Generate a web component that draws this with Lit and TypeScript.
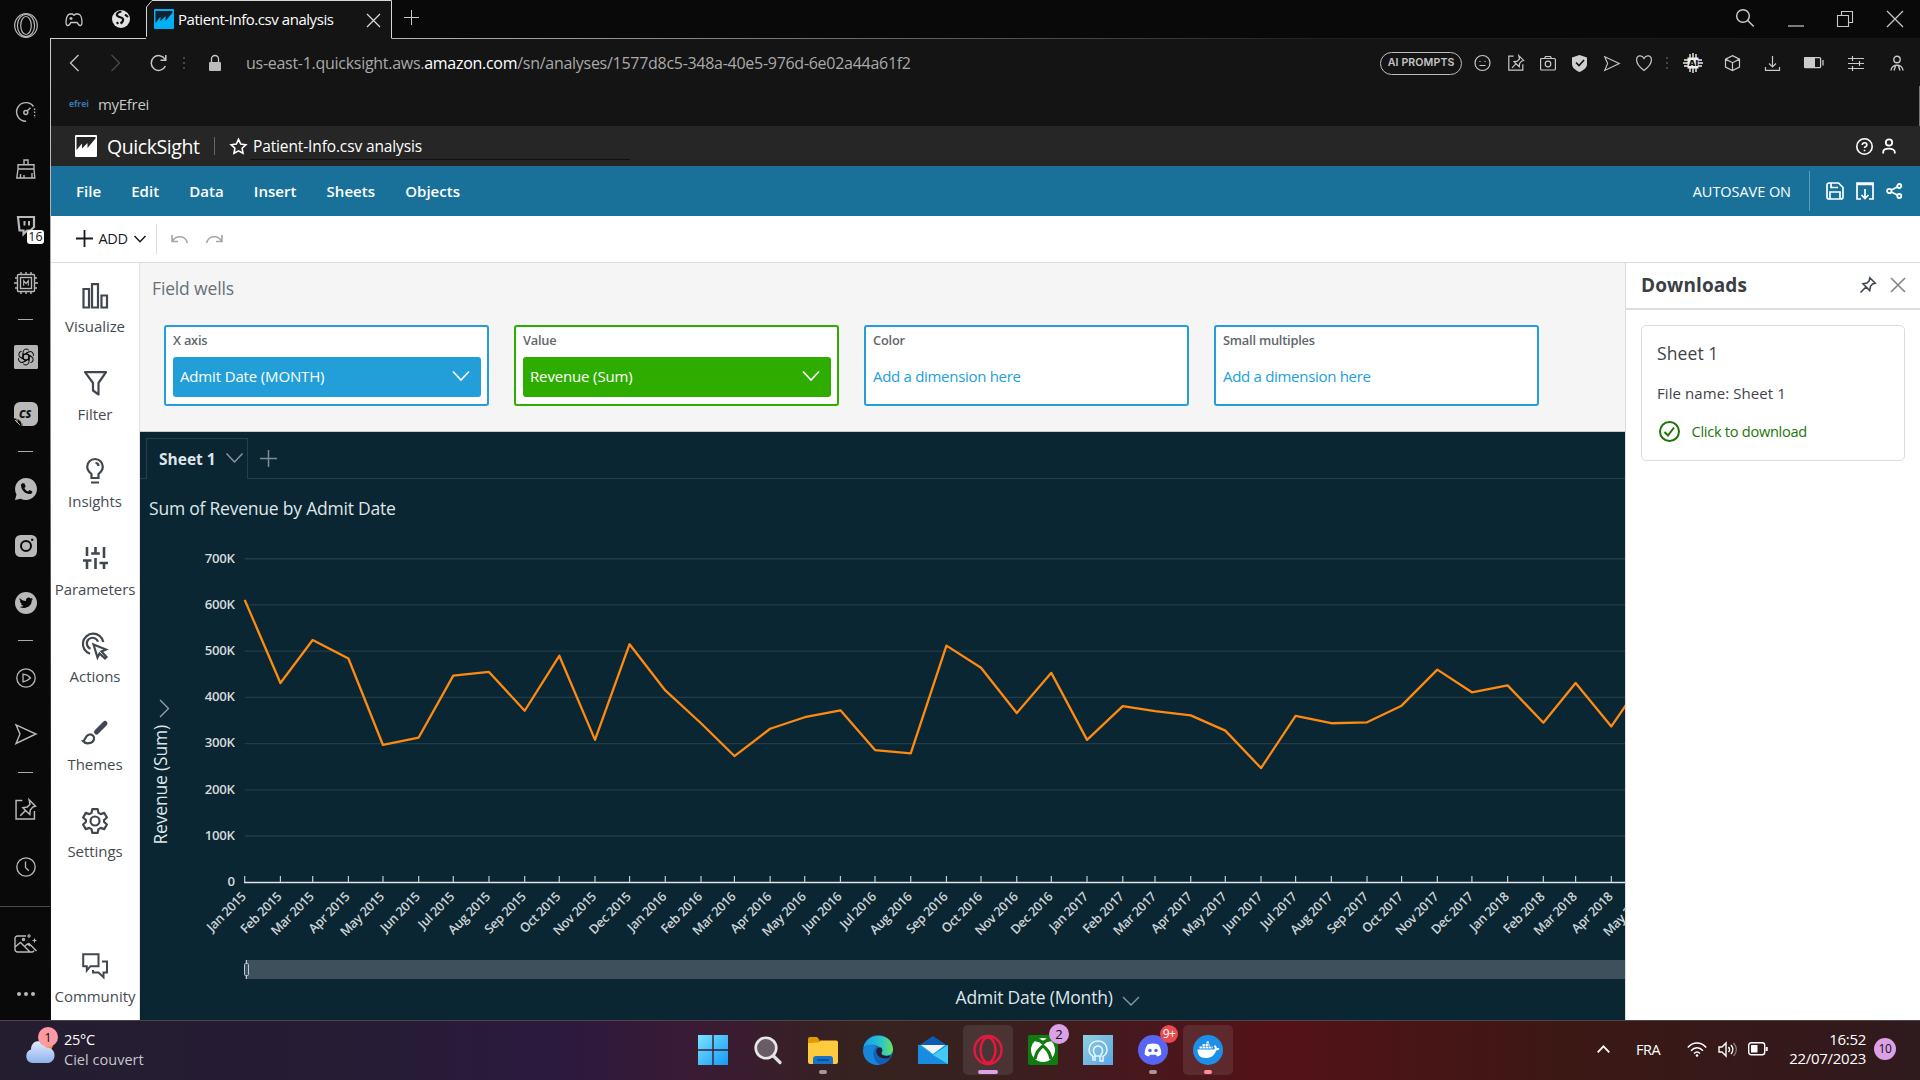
import { LitElement, html, css, svg, SVGTemplateResult } from "lit";
import { customElement } from "lit/decorators.js";

/** Wraps SVG shapes in a sized icon. Stroke icons inherit the text colour. */
const icon = (w: number, h: number, body: SVGTemplateResult, sw = 1.5, box = `0 0 ${w} ${h}`) => html`
  <svg class="icon" width=${w} height=${h} viewBox=${box} fill="none" stroke="currentColor" stroke-width=${sw}>${body}</svg>`;

const FONT = css`
  :host {
    font-family: "Open Sans", "Noto Sans", sans-serif;
    box-sizing: border-box;
  }
  * { box-sizing: border-box; }
  .icon { display: block; flex: none; overflow: visible; }
  svg text { font-family: "Open Sans", "Noto Sans", sans-serif; }
`;

const pinNote = svg`<path d="M7 1.500H1v17.500h17.500v-7.500"/><path d="M13.500.8l6 6-2.600.9-2.400 2.800-.4 4.200-3.300-3.100-3.300-3.300 4.200-.7 2.600-2.600zM10.500 10.500L5 16"/>`;
const paperPlane = svg`<path d="M1 .8L21 10 1 19.500 5 10z"/>`;

/* ------------------------------------------------ browser side bar */

@customElement("side-bar")
export class SideBar extends LitElement {
  static styles = [FONT, css`
    :host {
      display: flex; flex-direction: column; width: 50px; height: 1020px; padding-left: 1px;
      background: #090909; color: #b9b9b9;
    }
    .slot { height: 57px; display: flex; align-items: center; justify-content: center; flex: none; }
    .first { height: 51px; margin-bottom: 32px; }
    .dash { height: 17.800px; display: flex; align-items: center; justify-content: center; flex: none; }
    .dash i { width: 15px; height: 1px; background: #aaa; }
    .rule { height: 1px; background: #4a4a4a; margin: 10.500px 0 8px -1px; flex: none; }
    .badged { position: relative; margin-left: 1px; }
    .badge {
      position: absolute; left: 10px; top: 14px; width: 17px; height: 14px; background: #fff;
      color: #111; border-radius: 3px; font-size: 12.500px; line-height: 14px; text-align: center;
    }
    .last { height: 45px; }
  `];

  render() {
    const slot = (b: unknown, c = "") => html`<div class="slot ${c}">${b}</div>`;
    const dash = html`<div class="dash"><i></i></div>`;
    return html`
      ${slot(icon(24, 25, svg`<ellipse cx="12" cy="12.500" rx="11.300" ry="11.800"/><ellipse cx="12" cy="12.500" rx="8.600" ry="11"/><ellipse cx="12" cy="12.500" rx="5.300" ry="9"/>`, 1.2), "first")}
      ${slot(icon(20, 20, svg`<path d="M10 19.200A9.300 9.300 0 1 1 17.500 4.500"/><path d="M18.600 6.500v9.500" stroke-dasharray="1.500 1.600"/><circle cx="9.800" cy="10.500" r="2"/><path d="M11.200 9L14.500 5.800"/>`, 1.4))}
      ${slot(icon(20, 20, svg`<path d="M8 5.500V1h4v4.500M2 10V5.700h16V10zM2 10L.8 19h18L18 10M4.500 19v-4M8 19v-3M16 19v-5"/>`, 1.4))}
      ${slot(html`<div class="badged">${icon(18, 19, svg`<path d="M1 1h16v10l-3.500 3.500H10L6.500 18v-3.500H2.500z" stroke-width="2.200"/><path d="M7.500 5v4.500M12 5v4.500" stroke-width="2"/>`)}<div class="badge">16</div></div>`)}
      ${slot(icon(24, 24, svg`<rect x="3.500" y="3.500" width="17" height="17" rx="1"/><rect x="6.500" y="6.500" width="11" height="11"/><path d="M7 3.500V1M12 3.500V1M17 3.500V1M7 23v-2.500M12 23v-2.500M17 23v-2.500M1 7h2.500M0 12h3.500M1 17h2.500M23 7h-2.500M24 12h-3.500M23 17h-2.500"/><path d="M9.700 14.700V9.500l2.300 3 2.300-3v5.200" stroke-width="1.100"/>`, 1.4))}
      ${dash}
      ${slot(icon(24, 24, svg`<rect width="24" height="24" rx="1.500" fill="#b4b4b4" stroke="none"/><g stroke="#090909" stroke-width="1">${[0, 60, 120, 180, 240, 300].map(a => svg`<path transform="rotate(${a} 12 12)" d="M9 13.700V7.300a3.300 3.300 0 0 1 5.800-2.100M9 10.300l3-1.700 4.800 2.800"/>`)}</g>`))}
      ${slot(icon(24, 24, svg`<path d="M6 0h12a6 6 0 0 1 6 6v12a6 6 0 0 1-6 6H9A9 9 0 0 0 0 16V6a6 6 0 0 1 6-6z" fill="#b9b9b9" stroke="none"/><path d="M0 16c4-.6 9 4 8 8M3 16.500v4M1 18l5 5" stroke-width="1"/><text x="5" y="15.500" font-size="10.500" font-weight="800" font-style="italic" fill="#111" stroke="none">CS</text>`))}
      ${dash}
      ${slot(icon(22, 22, svg`<path d="M11 0a11 11 0 1 1-5.200 20.700L0 22l1.500-5.500A11 11 0 0 1 11 0z" fill="#b9b9b9" stroke="none"/><path d="M6 7c0 5 4.500 9.500 9.500 9 1.500-.2 2-1.500 1.800-2.400l-2.700-1.500-1.500 1.500c-1.800-.6-3-2-3.700-3.600L10.700 8.500 9.500 5.500C8 5 6 5.600 6 7z" fill="#090909" stroke="none"/>`))}
      ${slot(icon(22, 22, svg`<rect width="22" height="22" rx="5.500" fill="#b9b9b9" stroke="none"/><circle cx="11" cy="11" r="5" stroke="#090909" stroke-width="2"/><circle cx="17.200" cy="4.800" r="1.200" fill="#090909" stroke="none"/>`))}
      ${slot(icon(22, 22, svg`<circle cx="11" cy="11" r="11" fill="#b9b9b9" stroke="none"/><path d="M4.700 6c1.600 2 3.800 3 6.200 3.100-.5-3.200 3-4.500 4.900-2.700l1.900-.6-1.100 1.600 1.500-.3-1.400 1.500c.2 5.500-6 9.400-12.100 6.300 1.700.1 3-.4 3.900-1.200-1.300-.1-2.200-.9-2.500-1.900h1.200C5.800 11.400 5 10.300 5 9l1.200.3C5 8.500 4.200 7.500 4.700 6z" fill="#090909" stroke="none"/>`))}
      ${dash}
      ${slot(icon(20, 20, svg`<circle cx="10" cy="10" r="9.200"/><path d="M7 6.200c4 .4 6 2 7.500 3.800C13 11.500 11 13.300 7 13.800z"/>`, 1.3))}
      ${slot(icon(22, 21, paperPlane, 1.4))}
      ${dash}
      ${slot(icon(21, 21, pinNote, 1.4, "0 0 20 20"))}
      ${slot(icon(20, 20, svg`<circle cx="10" cy="10" r="9.200"/><path d="M9.500 4.500V10.500l3.300 3.300"/>`, 1.3))}
      <div class="rule"></div>
      ${slot(icon(23, 19, svg`<path d="M12 2H3.500A2.500 2.500 0 0 0 1 4.500v11A2.500 2.500 0 0 0 3.500 18H18a2 2 0 0 0 2-1.500M1 13l5.500-4.500 9 9M11 12l2.500-2 2.500 2M14.500 9l8 8"/><circle cx="9.500" cy="5.500" r="1"/><path d="M15 0v4M13 2h4M20.500 4.500v4M18.500 6.500h4" stroke-width="1.200"/>`, 1.4))}
      ${slot(icon(18, 4, svg`<g fill="currentColor" stroke="none"><circle cx="2" cy="2" r="2"/><circle cx="9" cy="2" r="2"/><circle cx="16" cy="2" r="2"/></g>`), "last")}
    `;
  }
}

/* ------------------------------------------------ browser chrome */

@customElement("browser-chrome")
export class BrowserChrome extends LitElement {
  static styles = [FONT, css`
    :host { display: block; color: #c8c8c8; font-size: 15px; height: 126px; background: #141414; }
    .tabs { height: 39px; display: flex; align-items: flex-start; background: #090909; }
    .lead { width: 95px; height: 39px; display: flex; padding: 10px 0 0 14px; gap: 29px; border-bottom: 1px solid #cfcfcf; }
    .lead svg:first-child { margin-top: 3px; }
    .tab { width: 246px; height: 39px; position: relative; display: flex; padding: 9px 0 0 8px; color: #fff; }
    .shape { position: absolute; left: 0; top: 0; }
    .fav, .name, .x { position: relative; }
    .name { margin-left: 4px; line-height: 20px; width: 189px; letter-spacing: -0.450px; white-space: nowrap; }
    .x { margin-top: 5px; color: #ddd; }
    .rest {
      flex: 1; height: 39px; display: flex; padding: 9px 17px 0 12px; background:
        linear-gradient(90deg, #b5b5b5, #777 25%, #222 60%, #141414) bottom / 100% 1px no-repeat;
    }
    .win { margin-left: auto; display: flex; gap: 33.700px; }
    .win > :nth-child(2) { margin-top: 16px; }
    .win > :nth-child(n+3) { margin-top: 2px; }
    .bar { height: 47px; display: flex; align-items: center; padding: 1px 16px 0 19px; }
    .bar .url { margin-left: 25px; font-size: 16px; letter-spacing: -0.280px; white-space: nowrap; color: #a9a9a9; }
    .url b { font-weight: 500; color: #fff; }
    .fwd { color: #4a4a4a; margin: 0 30px 0 32px; }
    .dots { width: 2px; height: 13px; margin: 0 24px 0 16px; background: repeating-linear-gradient(#444 0 2px, transparent 2px 5px); }
    .pill {
      margin-left: auto; width: 82px; height: 23px; border: 1.500px solid #bdbdbd; border-radius: 12px;
      font: 600 10.600px/20px Inter, sans-serif; text-align: center; letter-spacing: .1px; color: #c4c4c4; margin-right: 12px;
    }
    .tools { display: flex; align-items: center; gap: 16.400px; }
    .tools .dots { margin: 0 3px 0 -2.500px; }
    .ext { display: flex; align-items: center; gap: 24px; margin-left: 12px; }
    .ext svg:nth-child(2) { margin: 0 1px 0 -2px; }
    .ext svg:last-child { margin-left: 2px; }
    .marks { height: 40px; display: flex; align-items: center; padding: 0 0 5px 18px; gap: 9px; border-right: 1px solid #777; }
    .efrei { color: #3a77ad; font-weight: 700; font-size: 8.500px; line-height: 20px; width: 20px; letter-spacing: 0; padding-top: 1px; }
    .marks span { letter-spacing: -0.300px; }
  `];

  render() {
    return html`
      <div class="tabs">
        <div class="lead">
          ${icon(18, 14, svg`<path d="M5 1h2.500l1 1h1l1-1H13c2.500 0 4 4 4 8.500 0 3-2 4-3.500 2L12 9.500H6L4.500 11.500C3 13.500 1 12.500 1 9.500 1 5 2.500 1 5 1zM6 4v3M4.500 5.500h3M12 4.200v.1M13 6.500v.1"/>`, 1.3)}
          ${icon(18, 18, svg`<circle cx="9" cy="9" r="9" fill="#e2e2e2" stroke="none"/><path d="M9.500 1.500c-4 .5-5.500 3-4 4.500s5 1 5.500 3-1 3.500-2.500 4.500M13 4.500l3 2.500M5 12l1 2" stroke="#111" stroke-width="2.200"/>`)}
        </div>
        <div class="tab">
          <svg class="shape" width="246" height="39"><path d="M-1 38.500L.5 36V7L6 .5H245.500V39H0z" fill="#141414"/><path d="M-1 38.500L.5 36V7L6 .5H245.500V38.500" fill="none" stroke="#d8d8d8"/></svg>
          <div class="fav">${icon(20, 20, svg`<rect width="20" height="20" rx="1" fill="#00b0f5" stroke="none"/><path d="M1.500 2h17v1.500l-7 8.500V7l-5 5V7.500L1.500 14z" fill="#123" stroke="none"/>`)}</div>
          <div class="name">Patient-Info.csv analysis</div>
          <div class="x">${icon(13, 13, svg`<path d="M0 0l13 13M13 0L0 13"/>`, 1.2)}</div>
        </div>
        <div class="rest">
          ${icon(15, 16, svg`<path d="M7.500 1v15M0 8.500h15"/>`, 1)}
          <div class="win">
            ${icon(18, 18, svg`<circle cx="7" cy="7" r="6.300"/><path d="M11.700 11.500l6 6"/>`, 1.5)}
            ${icon(16, 2, svg`<path d="M0 1h16"/>`, 1.2)}
            ${icon(16, 16, svg`<path d="M.500 4.500h11v11H.500zM4.500 4.500V.500h11v11h-4"/>`, 1.1)}
            ${icon(16, 16, svg`<path d="M0 0l16 16M16 0L0 16"/>`, 1.2)}
          </div>
        </div>
      </div>
      <div class="bar">
        ${icon(9, 16, svg`<path d="M8.500 0L.5 8l8 8"/>`, 1.3)}
        <div class="fwd">${icon(9, 16, svg`<path d="M.5 0l8 8-8 8"/>`, 1.3)}</div>
        ${icon(17, 16, svg`<path d="M15 4.200A7.400 7.400 0 1 0 15.400 11M15.800 0v5.200H10.500"/>`, 1.5)}
        <div class="dots"></div>
        ${icon(12, 16, svg`<rect y="7" width="12" height="9" rx="1" fill="#bbb" stroke="none"/><path d="M2.500 7V4a3.500 3.500 0 0 1 7 0v3"/>`, 1.3)}
        <div class="url">us-east-1.quicksight.aws.<b>amazon.com</b>/sn/analyses/1577d8c5-348a-40e5-976d-6e02a44a61f2</div>
        <div class="pill">AI PROMPTS</div>
        <div class="tools">
          ${icon(17, 16, svg`<circle cx="8.500" cy="8" r="7.500"/><path d="M5.500 10.500h6M6 6v.9M11 6v.9"/>`, 1.2)}
          ${icon(16, 16, pinNote, 1.5, "0 0 20 20")}
          ${icon(16, 14, svg`<rect x=".6" y="2.500" width="14.800" height="11.500" rx="1"/><path d="M4.500 2.500l1-2h5l1 2"/><circle cx="8" cy="8" r="2.800"/>`, 1.2)}
          ${icon(15, 17, svg`<path d="M7.500 0L15 2.500V9c0 4-4 6.500-7.500 8C4 15.500 0 13 0 9V2.500z" fill="#cfcfcf" stroke="none"/><path d="M4 7.500L7 10.500l5-5.500" stroke="#111" stroke-width="1.600"/>`)}
          ${icon(16, 15, paperPlane, 1.5, "0 0 22 20")}
          ${icon(16, 16, svg`<path d="M8 15.500C4 12.500.6 9 .6 5 .6 0 6 -.5 8 3.500 10-.5 15.400 0 15.400 5c0 4-3.400 7.500-7.400 10.500z"/>`, 1.2)}
          <div class="dots"></div>
        </div>
        <div class="ext">
          ${icon(20, 20, svg`<path d="M7 1v18M10 0v20M13 1v18M1 7h18M0 10h20M1 13h18" stroke="#eee" stroke-width="1.400"/><rect x="4.500" y="4.500" width="11" height="11" fill="#eee" stroke="none"/><text x="5.800" y="13.400" font-size="9" font-weight="800" fill="#111" stroke="none">AI</text>`)}
          ${icon(15, 16, svg`<path d="M7.500.6l7 3.500v8l-7 3.400-7-3.400v-8zM.5 4.100l7 3.600 7-3.600M7.500 7.700v7.800"/>`, 1.2)}
          ${icon(15, 15, svg`<path d="M7.500 0v10.500M4 7.500l3.500 3.500L11 7.500M.5 11v3.300h14V11"/>`, 1.2)}
          ${icon(20, 12, svg`<rect x=".6" y=".6" width="16" height="10" rx="1.200"/><rect width="11" height="11" rx="1" fill="#ccc" stroke="none"/><path d="M19 3v5.500"/>`, 1.3)}
          ${icon(16, 15, svg`<path d="M0 2.500h16M0 7.500h16M0 12.500h16M4.500 0v5M11.500 5v5M4.500 10v5"/>`, 1.2)}
          ${icon(14, 16, svg`<circle cx="7" cy="4.500" r="3.200"/><path d="M1 15.500c.5-7 11.500-7 12 0M4 15.500l1.500-4.500M10 15.500L8.500 11"/>`, 1.4)}
        </div>
      </div>
      <div class="marks"><div class="efrei">efrei</div><span>myEfrei</span></div>
    `;
  }
}

/* ------------------------------------------------ QuickSight header, menu and toolbar */

@customElement("qs-header")
export class QsHeader extends LitElement {
  static styles = [FONT, css`
    :host { display: block; color: #fff; }
    .brand { height: 40px; background: #262626; display: flex; align-items: center; padding: 0 24px; }
    .product { margin-left: 10px; font-size: 19.500px; font-weight: 500; letter-spacing: -0.430px; width: 107px; }
    .split { width: 1px; height: 18px; background: #666; margin-right: 15px; }
    .title { margin-left: 3px; padding: 4px 0 0 3px; width: 380px; height: 28px; line-height: 20px; border-bottom: 1px solid #111; font-size: 15.500px; font-weight: 500; letter-spacing: -0.130px; }
    .who { margin-left: auto; display: flex; gap: 9px; }
    .menu { height: 50px; background: #19719a; display: flex; align-items: center; padding: 0 17px 0 25px; font-size: 15px; font-weight: 600; letter-spacing: .050px; }
    .menu span { margin-right: 30px; }
    .auto { margin-left: auto; font-weight: 500; font-size: 14.500px; letter-spacing: -0.050px; }
    .line { width: 1px; height: 40px; background: #5b9dbb; margin: 0 16px 0 18px; }
    .acts { display: flex; gap: 12px; align-items: center; }
    .tool { height: 47px; background: #fff; color: #16191f; display: flex; align-items: center; padding: 0 0 1px 24.500px; border-bottom: 1px solid #dcdcdc; font-size: 14.500px; }
    .tool .add { margin: 0 7px 0 6px; letter-spacing: -0.400px; width: 28px; }
    .bar { width: 1px; height: 30px; background: #ddd; margin: 0 14px 0 10px; }
    .hist { display: flex; gap: 18px; color: #a6a6a6; }
  `];

  render() {
    const undo = svg`<path d="M1 1v6.500h6M1.500 7C5 1 14 1 16.500 9"/>`;
    return html`
      <div class="brand">
        ${icon(22, 22, svg`<rect width="22" height="22" rx="1" fill="#fff" stroke="none"/><path d="M1.500 2h19v1.500L12.500 13V8L7 13.500V8.500L1.500 15z" fill="#262626" stroke="none"/>`)}
        <div class="product">QuickSight</div>
        <div class="split"></div>
        ${icon(17, 16, svg`<path d="M8.500 1.300l2.200 4.700 5.200.7-3.800 3.500.9 5.100-4.500-2.500L4 15.300l.9-5.100L1.100 6.700 6.300 6z"/>`, 1.6)}
        <div class="title">Patient-Info.csv analysis</div>
        <div class="who">
          ${icon(17, 17, svg`<circle cx="8.500" cy="8.500" r="7.700"/><path d="M6.200 7c0-3 4.700-2.800 4.700 0 0 1.500-2.400 1.500-2.400 3M8.500 11.800v1.500"/>`, 1.6)}
          ${icon(14, 16, svg`<circle cx="7" cy="4.500" r="3.200"/><path d="M1.200 15.500v-1.500c0-4.500 11.600-4.500 11.600 0v1.500"/>`, 1.8)}
        </div>
      </div>
      <div class="menu">
        ${["File", "Edit", "Data", "Insert", "Sheets", "Objects"].map(m => html`<span>${m}</span>`)}
        <div class="auto">AUTOSAVE ON</div>
        <div class="line"></div>
        <div class="acts">
          ${icon(18, 18, svg`<path d="M1 3a2 2 0 0 1 2-2h9.500L17 5.500V15a2 2 0 0 1-2 2H3a2 2 0 0 1-2-2zM4 17v-7h10v7M5 1v4.500h7"/>`, 1.7)}
          ${icon(18, 18, svg`<path d="M5 17H1V1h16v16h-4M1 2.500h16M9 7v9.500M5.500 13L9 16.500l3.500-3.500"/>`, 1.7)}
          ${icon(17, 16, svg`<circle cx="3.300" cy="8" r="2.200"/><circle cx="13.300" cy="3" r="2"/><circle cx="13.300" cy="13" r="2"/><path d="M5.300 7l6-3M5.300 9l6 3"/>`, 1.8)}
        </div>
      </div>
      <div class="tool">
        ${icon(17, 17, svg`<path d="M8.500 0v17M0 8.500h17"/>`, 1.8)}
        <div class="add">ADD</div>
        ${icon(12, 8, svg`<path d="M.5 1L6 6.700 11.500 1"/>`, 1.5)}
        <div class="bar"></div>
        <div class="hist">
          ${icon(17, 10, undo, 1.6)}
          ${icon(17, 10, svg`<g transform="translate(17 0) scale(-1 1)">${undo}</g>`, 1.6)}
        </div>
      </div>
    `;
  }
}

/* ------------------------------------------------ analysis navigation */

@customElement("qs-nav")
export class QsNav extends LitElement {
  static styles = [FONT, css`
    :host { display: flex; flex-direction: column; width: 89px; height: 757px; background: #fff; border-right: 1px solid #e2e2e2; color: #414750; padding-top: 18.500px; }
    .item { height: 87.500px; display: flex; flex-direction: column; align-items: center; flex: none; }
    .glyph { height: 28px; display: flex; align-items: center; }
    .label { font-size: 15px; line-height: 20px; margin-top: 6.500px; letter-spacing: -0.050px; white-space: nowrap; color: #454b52; }
    .item:last-child { margin-top: 57.500px; }
  `];

  render() {
    const items: [string, unknown][] = [
      ["Visualize", icon(26, 26, svg`<path d="M1.500 6h5.500v18.500H1.500zM10 1.200h6v23.300h-6zM19.500 12.500H25v12h-5.500z"/>`, 2.2)],
      ["Filter", icon(23, 25, svg`<path d="M1 1.200h21L14.500 12v11.500L9 19.500V12z" stroke-linejoin="round"/>`, 2.2)],
      ["Insights", icon(18, 26, svg`<path d="M5.500 20v-4C3 14 1.200 12 1.200 8.800a7.800 7.800 0 0 1 15.600 0c0 3.200-1.800 5.200-4.300 7.200v4zM5 24.500h8M9.500 5c1.800 0 3 1.200 3 3"/>`, 2.2)],
      ["Parameters", icon(25, 22, svg`<path d="M4 0v9M4 14v8M0 13.500h8.500M12.500 0v6M12.500 11v11M8.200 6.500h8.600M21 0v11M21 17v5M16.500 16h8.500"/>`, 2.6)],
      ["Actions", icon(26, 26, svg`<path d="M8 20.800A10.300 10.300 0 1 1 21.300 9"/><path d="M8.500 15.800a5.700 5.700 0 1 1 7.500-7"/><path d="M11.500 11.500l12.500 5-4.500 2 5 5.500-1.500 1.500-5.500-5-2 4z"/>`, 2.2)],
      ["Themes", icon(26, 24, svg`<path d="M23 2.500L14.500 11" stroke-width="5" stroke-linecap="round"/><path d="M1 20c2.500-.3 2-6 6.500-6.500 3-.3 5 2 4.500 4.500-1 5-8.500 5.500-11 2z" stroke-width="2.200"/>`)],
      ["Settings", icon(26, 26, svg`<path d="M10.300 1.200h5.400l.8 3.700 2.200 1.200 3.500-1.200 2.700 4.600-2.800 2.500v2l2.800 2.500-2.700 4.600-3.500-1.200-2.200 1.200-.8 3.700h-5.400l-.8-3.700-2.200-1.200-3.500 1.200-2.700-4.600L3.900 14v-2L1.100 9.500l2.700-4.600 3.500 1.200 2.200-1.200z" stroke-linejoin="round"/><circle cx="13" cy="13" r="4.500"/>`, 2.2)],
      ["Community", icon(26, 26, svg`<path d="M1.200 1.200h15.300v12H8.500l-3.700 4.300v-4.300H1.200z"/><path d="M20 8.500h5v11h-3.500v4.700l-5-4.700H11V17"/>`, 2)],
    ];
    return items.map(([label, glyph]) => html`
      <div class="item"><div class="glyph">${glyph}</div><div class="label">${label}</div></div>`);
  }
}

/* ------------------------------------------------ field wells */

@customElement("field-wells")
export class FieldWells extends LitElement {
  static styles = [FONT, css`
    :host { display: block; height: 169px; background: #f5f5f5; border-bottom: 1px solid #ccc; padding: 13px 12px 0; }
    .head { font-size: 17.500px; line-height: 24px; color: #687078; letter-spacing: -0.150px; }
    .wells { display: flex; gap: 25px; padding: 25px 0 0 12px; }
    .well { width: 325px; height: 81px; border: 2px solid #229fd9; border-radius: 3px; background: #fff; padding: 4px 6px 0 7px; }
    .well.value { border-color: #2ead00; }
    .cap { font-size: 12.800px; font-weight: 600; line-height: 18px; color: #5f666e; letter-spacing: -0.200px; }
    .pill { margin-top: 8px; height: 40px; border-radius: 3px; background: #229fd9; color: #fff; display: flex; align-items: center; justify-content: space-between; padding: 0 11px 2px 7px; font-size: 15px; font-weight: 500; letter-spacing: -0.150px; }
    .value .pill { background: #2ead00; }
    .hint { margin-top: 8px; line-height: 38px; color: #229fd9; font-size: 15px; letter-spacing: -0.300px; }
  `];

  render() {
    const arrow = icon(18, 10, svg`<path d="M1 .5l8 8.500 8-8.500"/>`, 1.6);
    return html`
      <div class="head">Field wells</div>
      <div class="wells">
        <div class="well"><div class="cap">X axis</div><div class="pill">Admit Date (MONTH)${arrow}</div></div>
        <div class="well value"><div class="cap">Value</div><div class="pill">Revenue (Sum)${arrow}</div></div>
        <div class="well"><div class="cap">Color</div><div class="hint">Add a dimension here</div></div>
        <div class="well"><div class="cap">Small multiples</div><div class="hint">Add a dimension here</div></div>
      </div>`;
  }
}

/* ------------------------------------------------ sheet with the revenue chart */

const MONTHS = ["Jan", "Feb", "Mar", "Apr", "May", "Jun", "Jul", "Aug", "Sep", "Oct", "Nov", "Dec"];

/** Monthly revenue in thousands, starting January 2015. */
const REVENUE = [
  611, 431, 524, 484, 297, 313, 447, 455, 371, 490, 308, 515,
  415, 344, 273, 332, 357, 372, 286, 279, 512, 464, 366, 453,
  308, 381, 370, 361, 328, 247, 360, 344, 346, 382, 460, 411,
  426, 345, 431, 337, 446,
];

@customElement("revenue-sheet")
export class RevenueSheet extends LitElement {
  static styles = [FONT, css`
    :host { display: block; height: 588px; background: #0a2633; color: #dfe5e8; overflow: hidden; }
    .tabs { display: flex; height: 47px; padding-top: 6px; }
    .gap { width: 6px; border-bottom: 1px solid #24404c; }
    .tab { width: 102px; border: 1px solid #24404c; border-bottom: 0; display: flex; align-items: center; padding: 0 0 1px 12px; gap: 9px; font-size: 15.500px; font-weight: 700; letter-spacing: 0; white-space: nowrap; }
    .tab span { width: 58px; }
    .arrow { color: #8b9aa2; padding-bottom: 2px; }
    .more { flex: 1; border-bottom: 1px solid #24404c; padding: 12px 0 0 12px; color: #7e8d95; }
    .title { padding: 17px 0 0 9px; font-size: 17.500px; line-height: 24px; font-weight: 500; letter-spacing: -0.220px; height: 55px; }
    .plot { display: block; }
    .ylab { font-size: 13.200px; font-weight: 600; letter-spacing: -0.300px; }
    .xlab { font-size: 12.800px; font-weight: 600; letter-spacing: -0.350px; }
    .axis { font-size: 17.500px; font-weight: 500; letter-spacing: -0.180px; }
  `];

  render() {
    const x0 = 104.700, y0 = 348.200, perDay = 1.1523, perK = 0.4621;
    const start = Date.UTC(2015, 0, 1);
    const points = REVENUE.map((v, i) => {
      const days = (Date.UTC(2015, i, 1) - start) / 86400000;
      return { x: x0 + days * perDay, y: y0 - v * perK, label: `${MONTHS[i % 12]} ${2015 + Math.floor(i / 12)}` };
    });
    return html`
      <div class="tabs">
        <div class="gap"></div>
        <div class="tab"><span>Sheet 1</span><div class="arrow">${icon(17, 10, svg`<path d="M.5.5l8 8.500 8-8.500"/>`, 1.4)}</div></div>
        <div class="more">${icon(17, 17, svg`<path d="M8.500 0v17M0 8.500h17"/>`, 1.5)}</div>
      </div>
      <div class="title">Sum of Revenue by Admit Date</div>
      <svg class="plot" width="1485" height="486" fill="none">
        ${[0, 1, 2, 3, 4, 5, 6, 7].map(n => {
          const y = y0 - n * 100 * perK;
          return svg`
            ${n ? svg`<line x1=${x0} x2="1485" y1=${y} y2=${y} stroke="#223d49" stroke-width="1.300"/>` : null}
            <text class="ylab" x="94.700" y=${y + 3.8} text-anchor="end" fill="#d5dadd">${n ? n * 100 + "K" : "0"}</text>`;
        })}
        <path d="M104 348.500H1485" stroke="#dfe5e8" stroke-width="1.300"/>
        ${points.map(p => svg`
          <line x1=${p.x} x2=${p.x} y1="342" y2="348" stroke="#c3ccd0" stroke-width="1.200"/>
          <text class="xlab" text-anchor="end" fill="#ccd3d6" transform="translate(${p.x + 2} 363.500) rotate(-45)">${p.label}</text>`)}
        <polyline points=${points.map(p => `${p.x},${p.y}`).join(" ")} stroke="#ff8a0f" stroke-width="2.300" stroke-linejoin="round"/>
        <rect x="105" y="426" width="1380" height="19" fill="#3d505b"/>
        <path d="M106.500 426v19" stroke="#b8c8d8"/>
        <rect x="104.500" y="429.500" width="4" height="12" rx="1" fill="#3d505b" stroke="#b8c8d8"/>
        <path d="M20 166l8.500 8.500L20 183" stroke="#98a5ac" stroke-width="1.300"/>
        <text class="axis" fill="#dfe5e8" transform="translate(27 310.500) rotate(-90)">Revenue (Sum)</text>
        <text class="axis" fill="#dfe5e8" x="815.500" y="469.500">Admit Date (Month)</text>
        <path d="M983 463l8 8 8-8" stroke="#8b9aa2" stroke-width="1.300"/>
      </svg>`;
  }
}

/* ------------------------------------------------ downloads panel */

@customElement("downloads-panel")
export class DownloadsPanel extends LitElement {
  static styles = [FONT, css`
    :host { display: block; width: 295px; height: 757px; background: #fff; border-left: 1px solid #dcdcdc; color: #414750; }
    .head { height: 47px; border-bottom: 2px solid #dedede; display: flex; align-items: center; padding: 0 15px 1px 15px; }
    .head b { flex: 1; font-size: 19px; font-weight: 700; letter-spacing: .100px; color: #3a3f45; }
    .close { margin-left: 15px; color: #878787; }
    .card { margin: 15px 15px 0; width: 264px; height: 136px; border: 1px solid #dcdcdc; border-radius: 5px; padding: 15px 15px; color: #3f444a; }
    .sheet { font-size: 17.500px; line-height: 24px; letter-spacing: .100px; }
    .file { font-size: 15px; line-height: 20px; margin-top: 18px; letter-spacing: .080px; }
    .get { display: flex; align-items: center; margin-top: 17px; gap: 11.500px; color: #1f7407; font-size: 14.600px; line-height: 22px; letter-spacing: -0.280px; padding-left: 2px; }
  `];

  render() {
    return html`
      <div class="head">
        <b>Downloads</b>
        ${icon(16, 16, svg`<path d="M9.800.8l5.500 5.500-2.800.7-2 2.300-.8 4.200L3 6.800l4-.8 2.200-2.200zM6 10l-5.500 5.500"/>`, 1.6)}
        <div class="close">${icon(14, 14, svg`<path d="M0 0l14 14M14 0L0 14"/>`, 1.7)}</div>
      </div>
      <div class="card">
        <div class="sheet">Sheet 1</div>
        <div class="file">File name: Sheet 1</div>
        <div class="get">${icon(21, 21, svg`<circle cx="10.500" cy="10.500" r="9.500"/><path d="M5.500 11l3.500 3.500L15 6.500"/>`, 2)}<span>Click to download</span></div>
      </div>`;
  }
}

/* ------------------------------------------------ Windows task bar */

@customElement("task-bar")
export class TaskBar extends LitElement {
  static styles = [FONT, css`
    :host {
      display: flex; height: 60px; width: 1920px; border-top: 1px solid #50454b; color: #fff; font-size: 14.500px;
      background: linear-gradient(90deg, #241d30 0, #261c35 380px, #2c193f 560px, #3a1b34 700px, #36221f 860px, #37211f 980px, #45191e 1110px, #531217 1280px, #481517 1420px, #3c1814 1560px, #34191b 1800px, #2f1a1d 1920px);
    }
    .weather { width: 688px; display: flex; padding: 9px 0 0 24px; }
    .cloud { position: relative; width: 40px; }
    .count { position: absolute; border-radius: 50%; text-align: center; color: #111; font-size: 13px; }
    .one { left: 14px; top: -3px; width: 20px; height: 20px; line-height: 20px; background: #ff9aa2; }
    .lines { line-height: 19.500px; letter-spacing: -0.300px; }
    .lines div + div { color: #c9c6cc; letter-spacing: .030px; }
    .apps { display: flex; gap: 5px; padding-top: 4px; }
    .app { width: 50px; height: 50px; border-radius: 5px; display: flex; align-items: center; justify-content: center; position: relative; }
    .app.on { background: #ffffff17; }
    .dot { position: absolute; bottom: 1px; width: 8px; height: 4px; border-radius: 2px; background: #a9969c; }
    .dot.wide { width: 20px; background: #dba2ea; }
    .dot.red { background: #ff8f98; }
    .two { left: 31px; top: -1px; width: 20px; height: 20px; line-height: 20px; background: #dba0e6; }
    .nine { left: 32px; top: 0; width: 18px; height: 18px; line-height: 17px; background: #e84a4f; color: #fff; font-size: 12px; letter-spacing: -0.500px; }
    .tray { margin-left: auto; display: flex; align-items: center; padding: 0 24px 3px 0; }
    .lang { margin: 0 25px 0 26px; width: 26px; letter-spacing: -0.500px; }
    .net { display: flex; gap: 11px; align-items: center; width: 100px; }
    .clock { text-align: right; line-height: 19.500px; width: 79px; font-size: 15px; letter-spacing: -0.280px; white-space: nowrap; display: flex; flex-direction: column; align-items: flex-end; }
    .ten { margin-left: 8px; width: 22px; height: 22px; line-height: 22px; border-radius: 50%; background: #dba0e6; color: #111; text-align: center; font-size: 12px; letter-spacing: -0.400px; }
  `];

  render() {
    const app = (b: unknown, extra: unknown = null, on = false) =>
      html`<div class="app ${on ? "on" : ""}">${b}${extra}</div>`;
    return html`
      <div class="weather">
        <div class="cloud">
          <svg class="icon" width="32" height="34">
            <defs><linearGradient id="cl" x2="0" y2="1"><stop stop-color="#dfeaff"/><stop offset="1" stop-color="#8fb2ec"/></linearGradient></defs>
            <circle cx="23" cy="15" r="6" fill="#ff8c1a"/>
            <path d="M8 33a7 7 0 0 1-1-13.500C7 9 20 9 22 17.500c10-1 12 14 2 15.500z" fill="url(#cl)"/>
          </svg>
          <div class="count one">1</div>
        </div>
        <div class="lines"><div>25°C</div><div>Ciel couvert</div></div>
      </div>
      <div class="apps">
        ${app(icon(30, 30, svg`<defs><linearGradient id="w" x2="1" y2="1"><stop stop-color="#7ae4ff"/><stop offset="1" stop-color="#1598f5"/></linearGradient></defs><path d="M0 0h14.300v14.300H0zM15.700 0H30v14.300H15.700zM0 15.700h14.300V30H0zM15.700 15.700H30V30H15.700z" fill="url(#w)" stroke="none"/>`))}
        ${app(icon(28, 28, svg`<circle cx="12" cy="12" r="10.300" fill="#6a5c66" stroke="#e8e8e8" stroke-width="2.600"/><path d="M19.500 20l6.500 6.500" stroke="#e0e0e0" stroke-width="3.200" stroke-linecap="round"/>`))}
        ${app(icon(30, 27, svg`<path d="M0 2a2 2 0 0 1 2-2h7l3 3.500h-1v5H0z" fill="#e09a00" stroke="none"/><path d="M0 6l10-.500 2.500-2H28a2 2 0 0 1 2 2V25a2 2 0 0 1-2 2H2a2 2 0 0 1-2-2z" fill="#ffcb3e" stroke="none"/><path d="M5 27v-5a3 3 0 0 1 3-3h14a3 3 0 0 1 3 3v5z" fill="#1673c9" stroke="none"/><path d="M9 23h12" stroke="#0b4a8c" stroke-width="1.500"/>`), html`<div class="dot"></div>`)}
        ${app(icon(30, 30, svg`<defs><linearGradient id="e1"><stop stop-color="#1c9de8"/><stop offset=".6" stop-color="#2bc5c9"/><stop offset="1" stop-color="#6be25b"/></linearGradient></defs><circle cx="15" cy="15" r="15" fill="#0f62b8" stroke="none"/><path d="M.500 13C2-2 28-5 30 13.500c.5 6-5 8.500-11 6.500-2-.7-.5-2-.3-4C19 10 5 7 .500 13z" fill="url(#e1)" stroke="none"/><path d="M.300 14C4 8 12 9.500 13.500 12 8 16 10 26 17 30 6 31-1 23 .300 14z" fill="#1786d8" stroke="none"/><path d="M13.500 15c-1 5 4 10 13 8l1-2.500c-7 1.500-10.500-1-8.300-4 .5-1 .1-3-1.200-4-2 0-4 .5-4.500 2.500z" fill="#2a1a2c" stroke="none"/>`))}
        ${app(icon(30, 28, svg`<path d="M15 0L30 10H0z" fill="#0b5cb0" stroke="none"/><path d="M0 9h30v19H0z" fill="#1b9be8" stroke="none"/><path d="M3 9h24L15 18z" fill="#f0f4fa" stroke="none"/><path d="M0 9l15 10L30 28H0z" fill="#178ce0" stroke="none"/><path d="M30 9L15 19l15 9z" fill="#43c9f5" stroke="none"/>`))}
        ${app(icon(30, 30, svg`<ellipse cx="15" cy="15" rx="13.500" ry="14" stroke="#e5193f" stroke-width="2.400"/><ellipse cx="15" cy="15" rx="7.500" ry="12.500" stroke="#e5193f" stroke-width="2.400"/>`), html`<div class="dot wide"></div>`, true)}
        ${app(icon(30, 30, svg`<rect width="30" height="30" rx="2" fill="#107c10" stroke="none"/><circle cx="15" cy="15" r="12" fill="#fff" stroke="none"/><path d="M7 5c4-.5 6 1 8 3 2-2 4-3.500 8-3M7 24c1-6 5-11 8-13 3 2 7 7 8 13" stroke="#107c10" stroke-width="3.200"/>`), html`<div class="count two">2</div>`)}
        ${app(icon(30, 30, svg`<defs><linearGradient id="t" x2="1" y2="1"><stop stop-color="#8fd0dd"/><stop offset="1" stop-color="#5aa6e6"/></linearGradient></defs><rect width="30" height="30" fill="url(#t)" stroke="none"/><path d="M10 26v-4.500C3 17 6 6 15 6s12 11 5 15.500V26h-3v-5M12 21v-1.500c-3-3-1.500-8.500 3-8.500s6 5.500 3 8.500V21h-6v5" stroke="#e6f6fb" stroke-width="1.500"/>`))}
        ${app(icon(30, 30, svg`<circle cx="15" cy="15" r="15" fill="#5865f2" stroke="none"/><path d="M9.500 9.500c3.500-1.500 7.500-1.500 11 0 2.500 4 3 7 2.700 10-2 1.500-3 1.700-4.200 2l-1-1.700h-6l-1 1.700c-1.200-.3-2.200-.5-4.200-2-.3-3 .2-6 2.700-10z" fill="#fff" stroke="none"/><circle cx="12" cy="15.500" r="1.800" fill="#5865f2" stroke="none"/><circle cx="18" cy="15.500" r="1.800" fill="#5865f2" stroke="none"/>`), html`<div class="count nine">9+</div><div class="dot"></div>`)}
        ${app(icon(30, 30, svg`<circle cx="15" cy="15" r="15" fill="#1d8fe8" stroke="none"/><path d="M4.500 14.500h17c.5-1.500 0-2.500-.5-3.500l1-1c1.300 1 1.700 2 1.800 3 1 0 2 0 2.700.8-.7 1.300-2 1.800-3.300 1.700C21.500 20.500 18 23 12.500 23 7 23 4.500 19.500 4.500 14.500z" fill="#fff" stroke="none"/><path d="M6.500 12.500h13M9.500 10h7M13.500 7.500h3" stroke="#fff" stroke-width="2" stroke-dasharray="2.400 .6"/>`), html`<div class="dot red"></div>`, true)}
      </div>
      <div class="tray">
        ${icon(13, 8, svg`<path d="M.7 7.300l5.800-6 5.800 6"/>`, 1.8)}
        <div class="lang">FRA</div>
        <div class="net">
          ${icon(20, 15, svg`<path d="M.8 5.500c5-6 13.400-6 18.400 0M4 8.700c3.500-4 8.500-4 12 0M7 11.500c2-2 4-2 6 0"/><circle cx="10" cy="13.500" r="1.300" fill="#fff" stroke="none"/>`, 1.5)}
          ${icon(19, 15, svg`<path d="M1 5v5h3l4 4V1L4 5z"/><path d="M10.500 5c1.300 1.500 1.300 3.500 0 5M13 3c2.500 3 2.500 6 0 9" /><path d="M15.500 1c3.500 4 3.500 9 0 13" stroke="#8a7a7a"/>`, 1.4)}
          ${icon(20, 14, svg`<rect x=".7" y=".7" width="16" height="12" rx="2.500"/><rect x="3" y="3" width="6.500" height="7.500" rx=".5" fill="#fff" stroke="none"/><path d="M18.700 5v4" stroke-width="2"/>`, 1.4)}
        </div>
        <div class="clock"><div>16:52</div><div>22/07/2023</div></div>
        <div class="ten">10</div>
      </div>`;
  }
}

/* ------------------------------------------------ page */

@customElement("app-root")
export class AppRoot extends LitElement {
  static styles = [FONT, css`
    :host { display: block; width: 1920px; height: 1080px; overflow: hidden; background: #fff; }
    .window { display: flex; height: 1020px; }
    .edge { width: 1px; margin-top: 38px; background: linear-gradient(#cfcfcf, #8a8a8a 40%, #555 55%, #222 75%, #0a0a0a); }
    .edgebox { background: #090909; display: flex; width: 1px; }
    .page { flex: 1; min-width: 0; display: flex; flex-direction: column; }
    .work { display: flex; }
    .canvas { flex: 1; min-width: 0; }
  `];

  render() {
    return html`
      <div class="window">
        <side-bar></side-bar>
        <div class="edgebox"><div class="edge"></div></div>
        <div class="page">
          <browser-chrome></browser-chrome>
          <qs-header></qs-header>
          <div class="work">
            <qs-nav></qs-nav>
            <div class="canvas">
              <field-wells></field-wells>
              <revenue-sheet></revenue-sheet>
            </div>
            <downloads-panel></downloads-panel>
          </div>
        </div>
      </div>
      <task-bar></task-bar>`;
  }
}
